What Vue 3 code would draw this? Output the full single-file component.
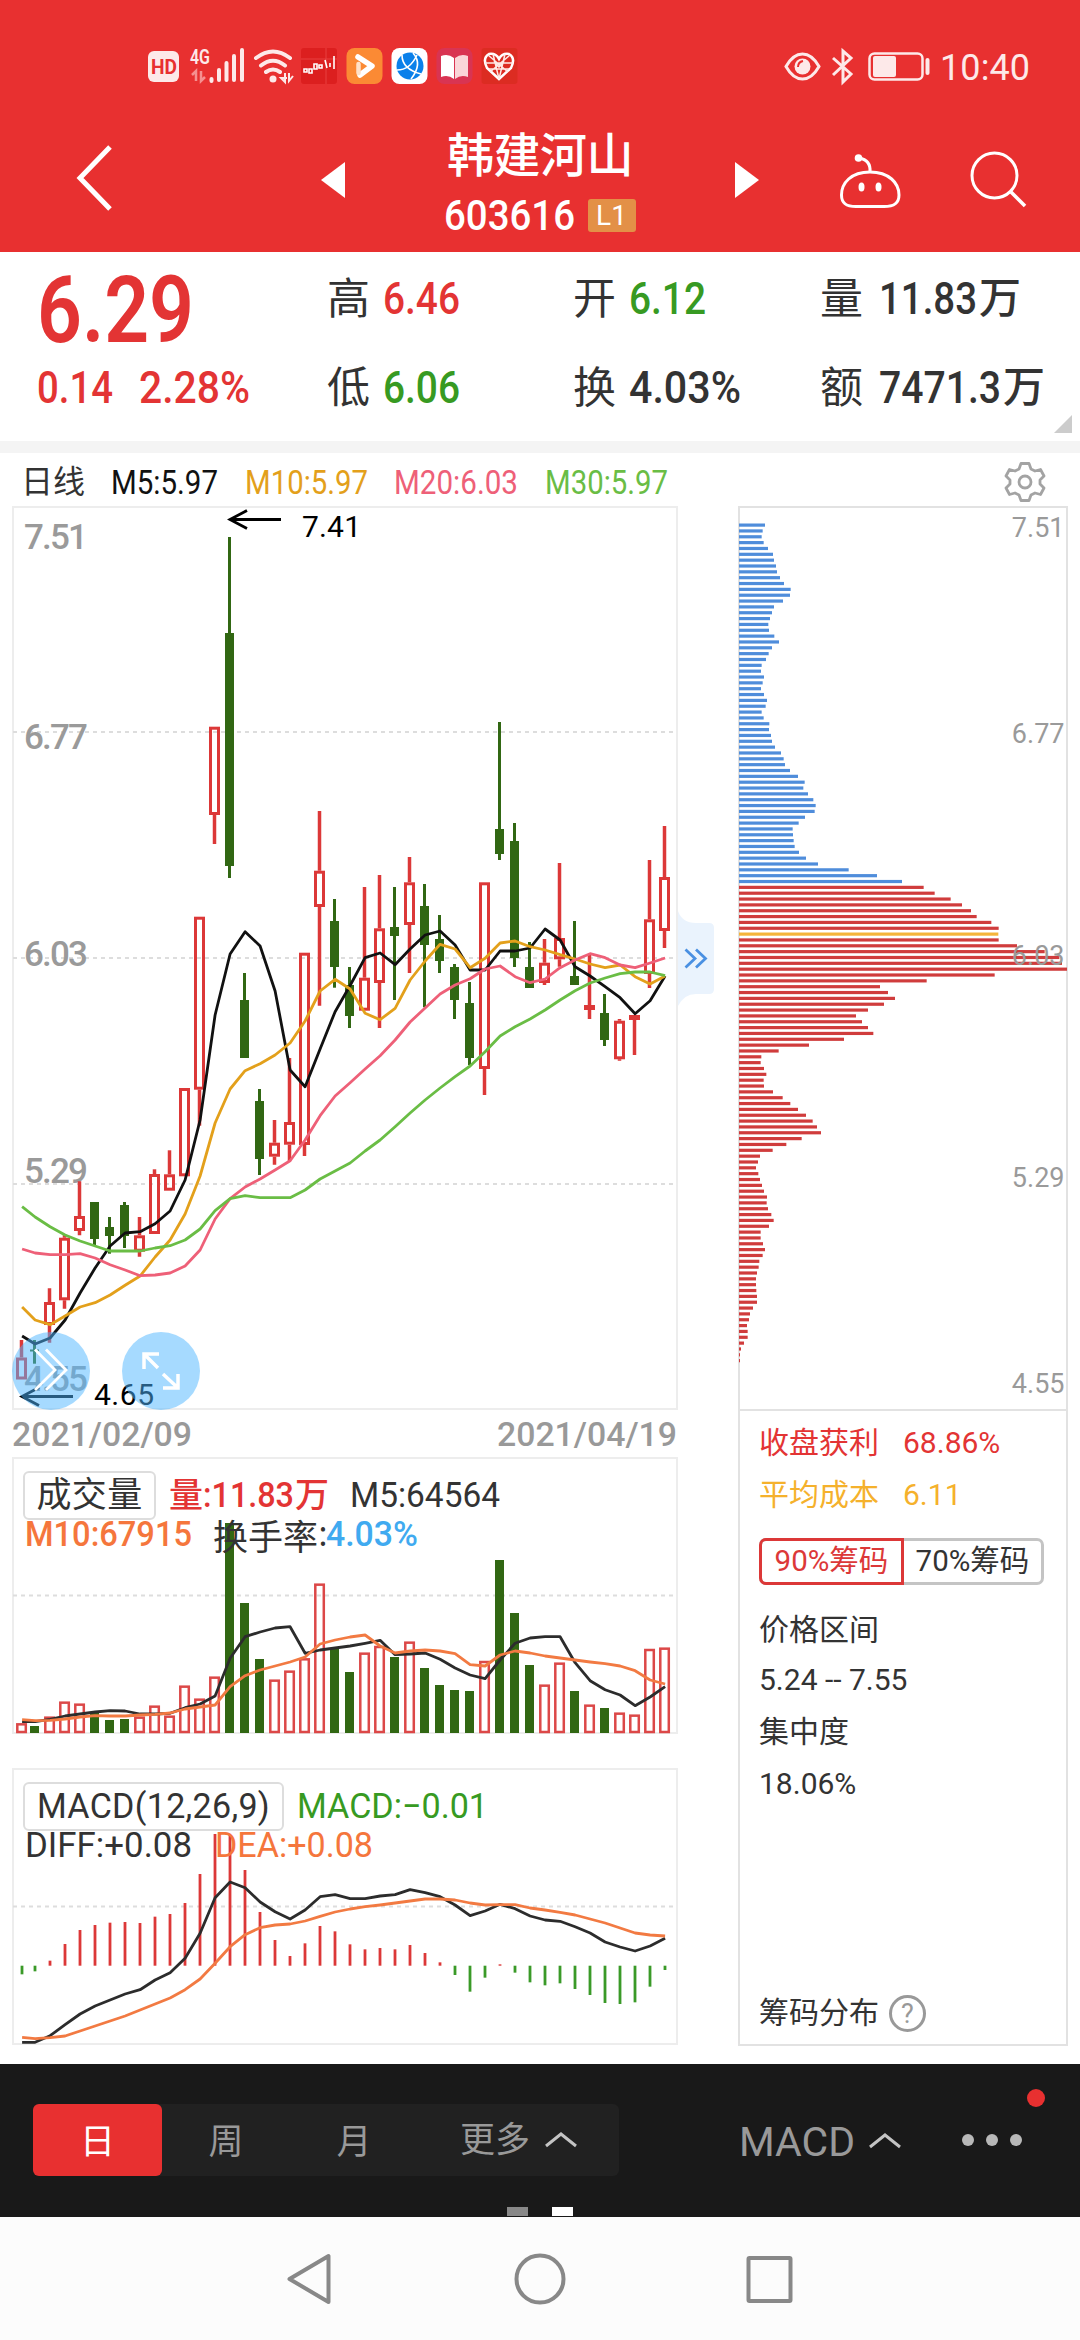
<script setup>
import { h } from 'vue'

// Text squeezed to a given width, as in a condensed numeral face.
const Fit = (p) =>
  h('svg', { class: 'fit', width: p.w, height: p.s * 0.72 }, [
    h('text', { x: -1, y: p.s * 0.715, 'font-size': p.s, textLength: +p.w + 1, lengthAdjust: 'spacingAndGlyphs', fill: 'currentColor' }, p.t),
  ])
Fit.props = ['t', 'w', 's']

const px = (i) => (i === 0 ? 21.5 : i === 1 ? 34.5 : 49.5 + 15 * (i - 2))
const line = (ys, base = 0, k = 1) => ys.map((y, i) => `${px(i) + 0.6},${(base + y / k).toFixed(1)}`).join(' ')

// colour, high, body top, body bottom, low
const candles = [
  ['r', 1340, 1357.5, 1379.5, 1379.5], ['g', 1340, 1349.5, 1351.5, 1363.7], ['r', 1288.3, 1302, 1325, 1342.7],
  ['r', 1234, 1237.7, 1300.3, 1308.7], ['r', 1181.3, 1216, 1231, 1235.3], ['g', 1202, 1202, 1239, 1245],
  ['g', 1217, 1227, 1236, 1253.7], ['g', 1202, 1205, 1236, 1248], ['r', 1217, 1235.3, 1251.7, 1256.7],
  ['r', 1169.3, 1174, 1234, 1234], ['r', 1150.3, 1174.3, 1190.7, 1190.7], ['r', 1088, 1088, 1176.3, 1176.3],
  ['r', 916.7, 916.7, 1089.7, 1125.7], ['r', 726.7, 726.7, 815, 844], ['g', 537, 633, 866, 878],
  ['g', 973, 1000, 1058, 1058], ['g', 1089, 1101, 1159, 1175], ['r', 1120, 1142.7, 1156.7, 1164.7],
  ['r', 1058, 1122, 1144.7, 1161.3], ['r', 952.7, 952.7, 1145, 1156], ['r', 811, 870.7, 907, 1005.7],
  ['g', 899, 921, 967, 987.7], ['g', 967, 985, 1016, 1028], ['r', 887, 977.7, 1010.7, 1010.7],
  ['r', 875, 928.3, 983, 1028], ['g', 887, 927, 936, 1000], ['r', 857, 882.3, 925, 973],
  ['g', 884, 906, 945, 1007.3], ['g', 915, 939, 961, 973], ['g', 964, 967, 1000, 1019],
  ['g', 982, 1003, 1058, 1065], ['r', 882.3, 882.3, 1069, 1095], ['g', 722, 829, 854, 860],
  ['g', 823, 841, 958, 967], ['g', 942, 967, 988, 988], ['r', 939, 962.7, 983, 985],
  ['r', 863, 938, 959.3, 966.7], ['g', 921, 976, 985, 985], ['r', 955, 1005, 1010, 1019],
  ['g', 994, 1013, 1040, 1046], ['r', 1019, 1020.7, 1059.3, 1060.7], ['r', 1015, 1015, 1020, 1055],
  ['r', 860, 919.3, 974, 988], ['r', 826, 877, 931, 948],
]
const ma5 = [1336, 1344, 1338, 1320, 1293, 1268, 1246, 1233, 1231.7, 1223.7, 1211, 1180, 1120, 1015, 954, 931.7, 946, 991, 1070, 1086.7, 1049, 1011.7, 985.5, 957.7, 953, 964.7, 949, 935, 931, 945, 970, 970, 951, 951, 948, 929, 940, 966.7, 976, 986.7, 997.7, 1013.7, 1000.7, 976]
const ma10 = [1307, 1320, 1324.7, 1316, 1307, 1302.7, 1295, 1285.3, 1276, 1257, 1240, 1214, 1176, 1123, 1089, 1070.7, 1063.7, 1055, 1043, 1021, 991, 979.3, 989, 1013.3, 1019.7, 1008.3, 980, 961, 944.3, 949, 967.7, 958.3, 943, 941, 946.7, 950, 954.7, 959, 964, 967.7, 965, 976.7, 984, 976]
const ma20 = [1249, 1253, 1254.7, 1254.7, 1253.7, 1258, 1264.7, 1270, 1275.7, 1275, 1273, 1266, 1250, 1219, 1198.7, 1187, 1179, 1170, 1160.7, 1140, 1115.7, 1096, 1082.7, 1069, 1055.7, 1040, 1022, 1008, 994, 985, 978.7, 969, 966, 976.7, 982.7, 979, 967.7, 960, 953.7, 957.7, 965, 967.7, 963, 958]
const ma30 = [1206.7, 1217, 1226.7, 1235, 1241, 1246, 1251, 1251, 1251, 1248, 1245.7, 1240, 1229, 1210.7, 1198.7, 1195.7, 1197.7, 1197.7, 1197.7, 1190, 1179, 1171, 1163, 1151, 1140, 1126.7, 1113, 1100, 1088, 1076.7, 1066, 1051.7, 1036, 1026.7, 1019, 1010, 1000, 990.7, 983, 978, 973.7, 972, 972, 975.7]
const priceLabels = [['7.51', 549], ['6.77', 749], ['6.03', 966], ['5.29', 1183], ['4.55', 1391]]

const vol = [820, 828, 800, 755, 761, 788, 810, 807, 800, 767, 797, 707, 746, 680, 219, 459, 627, 689, 662, 625, 401, 597, 666, 608, 588, 621, 575, 654, 705, 720, 723, 633, 330, 489, 645, 704, 638, 723, 764, 774, 788, 794, 597, 593]
const vol5 = [815, 815, 808, 798, 792, 786, 782, 783, 792, 792, 790, 773, 762, 738, 625, 560, 546, 534, 530, 610, 600, 594, 588, 580, 571, 614, 612, 609, 628, 654, 675, 686, 630, 580, 564, 560, 560, 638, 692, 719, 735, 767, 741, 710]
const vol10 = [809, 812, 811, 807, 801, 797, 798, 798, 795, 793, 789, 777, 771, 765, 710, 677, 660, 648, 636, 621, 582, 570, 561, 555, 588, 609, 603, 600, 603, 611, 644, 648, 615, 603, 609, 618, 624, 630, 636, 641, 648, 662, 690, 702]

const hist = [673, 664, 632, 582, 540, 525, 518, 516, 519, 500, 492, 459, 372, 252, 255, 360, 486, 570, 618, 580, 528, 544, 583, 598, 594, 598, 585, 609, 637, 675, 725, 683, 643, 668, 697, 706, 700, 717, 735, 759, 762, 757, 710, 660]
const diff = [877, 877, 857, 824, 792, 768, 750, 732, 719, 690, 668, 625, 550, 443, 396, 413, 456, 485, 507, 480, 440, 434, 446, 446, 438, 434, 419, 428, 440, 465, 497, 483, 463, 476, 498, 510, 514, 530, 549, 576, 591, 603, 588, 565]
const dea = [862, 866, 863, 858, 843, 828, 813, 798, 780, 762, 744, 719, 687, 640, 590, 554, 533, 525, 522, 513, 499, 486, 477, 470, 465, 459, 453, 447, 447, 450, 459, 465, 464, 464, 474, 480, 487, 495, 507, 519, 534, 549, 555, 558]

const chips = [165, 158, 155, 161, 174, 189, 192, 198, 201, 210, 222, 242, 240, 219, 192, 186, 180, 175, 177, 193, 207, 186, 176, 168, 155, 153, 162, 158, 153, 162, 171, 167, 155, 161, 178, 177, 183, 186, 195, 213, 221, 225, 240, 264, 284, 280, 294, 310, 317, 314, 285, 266, 248, 249, 251, 254, 267, 288, 324, 416, 501, 576,
  641, 674, 722, 756, 783, 800, 844, 866, 865, 866, 921, 1004, 1048, 1056, 1071, 854, 650, 510, 534, 555, 522, 474, 438, 456, 474, 490, 402, 297, 206, 154, 152, 162, 169, 161, 162, 189, 218, 241, 264, 288, 308, 321, 333, 275, 229, 188, 150, 144, 138, 145, 150, 156, 162, 171, 170, 174, 184, 191, 177, 152, 152, 159, 165, 158, 148, 146, 141, 138, 138, 139, 141, 141, 129, 120, 117, 111, 113, 113, 102, 93, 90, 90]
const chipColor = (i) => (i < 62 ? '#4f8ddb' : i === 70 ? '#f5b43a' : '#d03c3c')
const chipLabels = [['7.51', 537], ['6.77', 743], ['6.03', 965], ['5.29', 1187], ['4.55', 1393]]
</script>

<template>
  <div class="app">
    <header class="top">
      <svg class="status" width="1080" height="100" viewBox="0 0 1080 100">
        <rect x="148" y="51" width="31" height="31" rx="6" fill="#fde9e9" />
        <text x="151" y="74" font-size="21" font-weight="700" fill="#e83030" textLength="26" lengthAdjust="spacingAndGlyphs">HD</text>
        <text x="190" y="64" font-size="21" font-weight="600" fill="#fde9e9" textLength="20" lengthAdjust="spacingAndGlyphs">4G</text>
        <path d="M196 81V71L192 75M201 71V81L205 77" stroke="#f59090" stroke-width="2.5" fill="none" />
        <path d="M211.500 79V81M219 70V80M226.500 63V80M234 56V80M242 50V80" stroke="#fde9e9" stroke-width="4" stroke-linecap="round" />
        <g fill="none" stroke="#fde9e9" stroke-width="4" stroke-linecap="round">
          <path d="M256 58Q273 45 290 58M261 65.500Q273 56 285 65.500M266 72Q273 67 280 72" />
        </g>
        <circle cx="273" cy="79" r="3.500" fill="#fde9e9" />
        <path d="M285 73V82L281 78H287M289 73V81L293 76" stroke="#fde9e9" stroke-width="2" fill="none" />
        <rect x="301" y="48" width="36" height="36" rx="3" fill="#dc1f1f" />
        <path d="M301 59H337M326 48V84" stroke="#e84040" stroke-width="1" />
        <path d="M304 69H307V72H304ZM309 69H312V73H309ZM314 64H317V69H314ZM319 65H322V68H319ZM325 60L327 68M330 63V67M334 56V69" stroke="#fff" stroke-width="1.600" fill="none" />
        <rect x="346.500" y="48" width="36" height="36" rx="8" fill="#fb8a34" />
        <path d="M358 57L372 66L360 75" fill="none" stroke="#fff" stroke-width="5.500" stroke-linejoin="round" stroke-linecap="round" />
        <path d="M358.500 64V73" stroke="#ffe1c8" stroke-width="4.500" stroke-linecap="round" />
        <rect x="391.500" y="48" width="36" height="36" rx="8" fill="#fff" />
        <circle cx="410" cy="66" r="13.500" fill="#0a80ea" />
        <path d="M402 55Q402 69 421 74M397 70Q410 70 417 55M413 53Q423 64 411 79" stroke="#fff" stroke-width="1.600" fill="none" />
        <rect x="436.500" y="48" width="36" height="36" rx="8" fill="#d93452" />
        <path d="M441 56Q448 53 454 58V79Q448 74 441 77Z" fill="#fff" />
        <path d="M468 56Q461 53 455 58V79Q461 74 468 77Z" fill="#fad5d8" />
        <rect x="481.500" y="48" width="36" height="36" rx="3" fill="#dc2c22" />
        <path d="M499 79L487 68Q482 58 489 54Q496 53 499 59Q502 53 509 54Q516 58 511 68Z" fill="none" stroke="#fff" stroke-width="2.500" />
        <path d="M488 55L508 72M510 55L490 72M485 63H513M493 54L499 79L505 54M489 69H509M494 61L499 67L504 61" stroke="#ffe9e6" stroke-width="1.500" fill="none" />
        <g fill="none" stroke="#fde9e9" stroke-width="3">
          <path d="M786 66.500Q793 54 802.500 54Q812 54 819 66.500Q812 79 802.500 79Q793 79 786 66.500Z" />
          <path d="M833 58L851 74L843 82V51L851 58L833 75" />
          <rect x="869.500" y="53.500" width="53" height="26" rx="5" stroke-width="2.500" />
        </g>
        <circle cx="802.500" cy="66.500" r="8" fill="#fde9e9" />
        <path d="M798 67Q798 62 803 61" stroke="#e83030" stroke-width="2" fill="none" />
        <rect x="873" y="56" width="23" height="21" rx="2" fill="#fde9e9" />
        <rect x="925.500" y="58" width="4" height="17" rx="2" fill="#fde9e9" />
        <text x="940" y="80" font-size="36" fill="#fde9e9" textLength="90">10:40</text>
      </svg>
      <div class="titlebar">
        <svg class="back" width="40" height="70" viewBox="0 0 40 70"><path d="M35 4L5 35L35 66" fill="none" stroke="#fff" stroke-width="5" /></svg>
        <svg class="prev" width="24" height="36" viewBox="0 0 24 36"><path d="M24 0V36L0 18Z" fill="#fff" /></svg>
        <div class="title">
          <div class="name">韩建河山</div>
          <div class="code"><Fit t="603616" w="130" s="42" /><span class="badge">L1</span></div>
        </div>
        <svg class="next" width="24" height="36" viewBox="0 0 24 36"><path d="M0 0V36L24 18Z" fill="#fff" /></svg>
        <svg class="robot" width="62" height="58" viewBox="839 152 62 58">
          <path d="M870 172C889 172 899 183 899 195C899 204 893 206.500 884 206.500H856C847 206.500 841.500 204 841.500 195C841.500 183 851 172 870 172Z" fill="none" stroke="#fff" stroke-width="3" />
          <path d="M870 172Q871 160 859 158" fill="none" stroke="#fff" stroke-width="3" />
          <circle cx="858.500" cy="158" r="3.800" fill="#fff" /><ellipse cx="861.500" cy="187" rx="3" ry="4.500" fill="#fff" /><ellipse cx="878.500" cy="187" rx="3" ry="4.500" fill="#fff" />
        </svg>
        <svg class="search" width="60" height="60" viewBox="969 150 60 60"><circle cx="994.500" cy="175.500" r="22.500" fill="none" stroke="#fff" stroke-width="3" /><path d="M1010 191L1025 206" stroke="#fff" stroke-width="3.500" /></svg>
      </div>
    </header>

    <section class="quote">
      <div class="last red">
        <Fit class="big" t="6.29" w="156" s="92" />
        <div class="chg"><Fit t="0.14" w="75" s="45" /><Fit t="2.28%" w="110" s="45" /></div>
      </div>
      <div class="cells">
        <div class="cell"><span>高</span><Fit class="red" t="6.46" w="76" s="45" /></div>
        <div class="cell"><span>开</span><Fit class="green" t="6.12" w="76" s="45" /></div>
        <div class="cell"><span>量</span><Fit t="11.83" w="97" s="45" /><b>万</b></div>
        <div class="cell"><span>低</span><Fit class="green" t="6.06" w="76" s="45" /></div>
        <div class="cell"><span>换</span><Fit t="4.03%" w="111" s="45" /></div>
        <div class="cell"><span>额</span><Fit t="7471.3" w="121" s="45" /><b>万</b></div>
      </div>
      <svg class="corner" width="18" height="18" viewBox="0 0 18 18"><path d="M18 0V18H0Z" fill="#ccc" /></svg>
    </section>

    <div class="legend">
      <span class="period">日线</span>
      <Fit class="m5" t="M5:5.97" w="106" s="33" />
      <Fit class="m10" t="M10:5.97" w="122" s="33" />
      <Fit class="m20" t="M20:6.03" w="123" s="33" />
      <Fit class="m30" t="M30:5.97" w="122" s="33" />
      <svg class="gear" width="42" height="42" viewBox="-21 -21 42 42" fill="none" stroke="#a3a3a3" stroke-width="2.800" stroke-linejoin="round">
        <path d="M-4 -18.500H4L6 -13L10 -11L15.500 -12.500L19 -6L15 -2V2L19 6L15.500 12.500L10 11L6 13L4 18.500H-4L-6 13L-10 11L-15.500 12.500L-19 6L-15 2V-2L-19 -6L-15.500 -12.500L-10 -11L-6 -13Z" />
        <circle r="6" />
      </svg>
    </div>

    <main class="charts">
      <div class="left">
        <svg class="kline" width="704" height="904" viewBox="12 506 704 904">
          <rect x="13" y="507" width="664" height="902" fill="none" stroke="#ededed" stroke-width="2" />
          <path d="M13 732H677M13 958H677M13 1184H677" stroke="#ddd" stroke-width="2" stroke-dasharray="4 4" />
          <g font-size="35" font-weight="500" fill="#9a9a9a">
            <text v-for="l in priceLabels" :key="l[0]" x="24" :y="l[1]" textLength="64">{{ l[0] }}</text>
          </g>
          <g v-for="(c, i) in candles" :key="i">
            <template v-if="c[0] === 'g'">
              <path :d="`M${px(i)} ${c[1]}V${c[4]}`" stroke="#316713" stroke-width="3" />
              <rect :x="px(i) - 4.5" :y="c[2]" width="9" :height="c[3] - c[2]" fill="#316713" />
            </template>
            <template v-else>
              <path :d="`M${px(i)} ${c[1]}V${c[2]}M${px(i)} ${c[3]}V${c[4]}`" stroke="#dc3838" stroke-width="3.5" />
              <rect :x="px(i) - 4" :y="c[2] + 1.5" width="8" :height="c[3] - c[2] - 3" fill="none" stroke="#dc3838" stroke-width="3" />
            </template>
          </g>
          <g fill="none" stroke-width="2.8" stroke-linejoin="round">
            <polyline :points="line(ma5)" stroke="#111" />
            <polyline :points="line(ma10)" stroke="#e3a01b" />
            <polyline :points="line(ma20)" stroke="#ee6078" />
            <polyline :points="line(ma30)" stroke="#6abd45" />
          </g>
          <g fill="none" stroke="#000" stroke-width="2.8">
            <path d="M281 519.500H230M247 510.500L230 519.500L247 528.500" />
            <path d="M73 1396.500H22M39 1387.500L22 1396.500L39 1405.500" />
          </g>
          <text x="302" y="537" font-size="30" textLength="59" fill="#000">7.41</text>
          <text x="94" y="1405" font-size="30" textLength="60" fill="#000">4.65</text>
          <path d="M678 911Q682 923 696 923H709Q714 923 714 928V989Q714 994 709 994H696Q684 994 678 1006Z" fill="#eaf3fd" />
          <path d="M685.500 949.500L695 958.500L685.500 967.500M696 949.500L705.500 958.500L696 967.500" fill="none" stroke="#4a90e2" stroke-width="2.800" />
          <circle cx="51" cy="1371" r="39" fill="#4db5ff" fill-opacity=".5" />
          <circle cx="161" cy="1371" r="39" fill="#4db5ff" fill-opacity=".5" />
          <path d="M35 1349.500L55 1370L35 1390M46 1349.500L66 1370L46 1390" fill="none" stroke="#fff" stroke-width="2.800" />
          <path d="M158 1368L144 1354M144 1369V1354H159M163 1374L178 1388M178 1374V1388H163" fill="none" stroke="#fff" stroke-width="3.500" />
        </svg>
        <div class="dates"><Fit t="2021/02/09" w="179" s="34" /><Fit t="2021/04/19" w="179" s="34" /></div>
        <div class="sub vol">
          <svg width="666" height="278" viewBox="12 1457 666 278">
            <rect x="13" y="1458" width="664" height="275" fill="none" stroke="#ededed" stroke-width="2" />
            <path d="M13 1595.500H677" stroke="#ddd" stroke-width="2" stroke-dasharray="4 4" />
            <template v-for="(v, i) in vol" :key="i">
              <rect v-if="candles[i][0] === 'g'" :x="px(i) - 4.5" :y="1450 + v / 3" width="9" :height="283 - v / 3" fill="#316713" />
              <rect v-else :x="px(i) - 4.2" :y="1451 + v / 3" width="8.5" :height="281 - v / 3" fill="none" stroke="#dc4848" stroke-width="2.5" />
            </template>
            <g fill="none" stroke-width="2.8" stroke-linejoin="round">
              <polyline :points="line(vol5, 1450, 3)" stroke="#2c2c2c" />
              <polyline :points="line(vol10, 1450, 3)" stroke="#f27a42" />
            </g>
          </svg>
          <div class="info">
            <div class="row">
              <span class="btn">成交量</span>
              <span class="grp red">量<Fit t=":11.83" w="90" s="35" />万</span>
              <Fit t="M5:64564" w="149" s="35" class="gap" />
            </div>
            <div class="row two"><Fit class="orange" t="M10:67915" w="166" s="35" /><span class="turn">换手率</span><Fit t=":" w="7" s="35" /><Fit class="sky" t="4.03%" w="91" s="35" /></div>
          </div>
        </div>
        <div class="sub macd">
          <svg width="666" height="278" viewBox="12 1768 666 278">
            <rect x="13" y="1769" width="664" height="275" fill="none" stroke="#ededed" stroke-width="2" />
            <path d="M13 1906.500H677" stroke="#ddd" stroke-width="2" stroke-dasharray="4 4" />
            <path v-for="(v, i) in hist" :key="i" :d="`M${px(i) + 0.5} 1965.7V${1750 + v / 3}`" :stroke="v < 647 ? '#dc3838' : '#3a9a28'" stroke-width="2.8" />
            <g fill="none" stroke-width="2.8" stroke-linejoin="round">
              <polyline :points="line(diff, 1750, 3)" stroke="#2c2c2c" />
              <polyline :points="line(dea, 1750, 3)" stroke="#f27a42" />
            </g>
          </svg>
          <div class="info">
            <div class="row"><span class="btn wide"><Fit t="MACD(12,26,9)" w="232" s="35" /></span><Fit class="green m" t="MACD:−0.01" w="190" s="35" /></div>
            <div class="row two"><Fit t="DIFF:+0.08" w="166" s="35" /><Fit class="orange d" t="DEA:+0.08" w="157" s="35" /></div>
          </div>
        </div>
      </div>

      <aside class="panel">
        <svg width="330" height="903" viewBox="738 506 330 903">
          <rect v-for="(v, i) in chips" :key="i" x="739" :y="523.5 + i * 5.843" :width="(v - 87) / 3" height="3.2" :fill="chipColor(i)" />
          <g font-size="27" fill="#9a9a9a" text-anchor="end">
            <text v-for="l in chipLabels" :key="l[0]" x="1064.5" :y="l[1]">{{ l[0] }}</text>
          </g>
        </svg>
        <div class="stats">
          <p class="red"><span>收盘获利</span>68.86%</p>
          <p class="amber"><span>平均成本</span>6.11</p>
          <div class="switch"><span class="on">90%筹码</span><span>70%筹码</span></div>
          <p class="r1">价格区间</p>
          <p class="r2">5.24 -- 7.55</p>
          <p class="r3">集中度</p>
          <p class="r4">18.06%</p>
          <p class="foot">筹码分布<span class="q">?</span></p>
        </div>
      </aside>
    </main>

    <footer class="bar">
      <div class="tabs">
        <span class="tab on">日</span><span class="tab">周</span><span class="tab">月</span>
        <span class="tab more">更多<svg width="34" height="18" viewBox="0 0 34 18"><path d="M2 15L17 3L32 15" fill="none" stroke="#c4c4c4" stroke-width="3" /></svg></span>
      </div>
      <span class="ind"><Fit t="MACD" w="115" s="40" /><svg width="34" height="18" viewBox="0 0 34 18"><path d="M2 15L17 3L32 15" fill="none" stroke="#c4c4c4" stroke-width="3" /></svg></span>
      <span class="dots"><i /><i /><i /></span>
      <i class="reddot" />
      <div class="pages"><i /><i /></div>
    </footer>
    <nav class="nav">
      <svg width="1080" height="123" viewBox="0 2217 1080 123" fill="none" stroke="#888" stroke-width="4" stroke-linejoin="round">
        <path d="M328.500 2256V2302L289.500 2279Z" /><circle cx="540" cy="2279" r="23.500" /><rect x="748.500" y="2258" width="42" height="43" rx="1" />
      </svg>
    </nav>
  </div>
</template>

<style>
body { margin: 0; background: #fff; }
</style>

<style scoped>
.app { width: 1080px; height: 2340px; overflow: hidden; display: flex; flex-direction: column; font-family: Roboto, "Noto Sans CJK SC", sans-serif; color: #333; background: #fff; }
svg { display: block; flex: none; }
.fit { overflow: visible; font-weight: 500; }
.red { color: #e33434; }
.green { color: #379a22; }
.orange { color: #f5763c; }
.sky { color: #40aaf0; }
.top { height: 252px; background: #e83030; color: #fff; }
.titlebar { height: 152px; display: flex; align-items: flex-start; }
.back { margin: 43px 0 0 75px; }
.prev { margin: 62px 0 0 206px; }
.title { width: 192px; margin-left: 99px; display: flex; flex-direction: column; align-items: center; }
.name { font-size: 47px; line-height: 60px; margin-top: 26px; font-weight: 500; white-space: nowrap; letter-spacing: -.5px; }
.code { display: flex; align-items: center; gap: 13px; margin-top: 13px; }
.badge { width: 48px; height: 33px; line-height: 34px; text-align: center; font-size: 28px; background: #e39047; border-radius: 3px; }
.next { margin: 62px 0 0 99px; }
.robot { margin: 52px 0 0 80px; }
.search { margin: 50px 0 0 68px; }
.quote { position: relative; box-sizing: border-box; height: 201px; border-bottom: 12px solid #f4f4f4; display: flex; }
.last { width: 289px; padding-left: 38px; }
.big { margin-top: 24px; font-weight: 600; }
.chg { display: flex; gap: 27px; margin-top: 29px; }
.cells { display: grid; grid-template-columns: 246px 247px 252px; grid-template-rows: 89px 89px; padding-top: 2px; }
.cell { display: flex; align-items: center; font-size: 43px; line-height: 60px; white-space: nowrap; }
.cell span { width: 57px; flex: none; }
.cell:nth-child(3n) span { width: 60px; }
.cell b { font-weight: 500; font-size: 42px; margin-left: 2px; }
.corner { position: absolute; right: 8px; bottom: 8px; }
.legend { height: 53px; display: flex; align-items: center; padding: 4px 0 0 21px; box-sizing: border-box; }
.period { font-size: 32px; line-height: 40px; width: 91px; }
.legend .fit { font-weight: 400; }
.m5 { color: #111; }
.m10 { color: #e3a01b; margin-left: 28px; }
.m20 { color: #ee6078; margin-left: 27px; }
.m30 { color: #6abd45; margin-left: 28px; }
.gear { margin-left: 336px; }
.charts { display: flex; height: 1558px; }
.left { width: 704px; margin-left: 12px; }
.kline { overflow: visible; }
.dates { width: 666px; height: 47px; display: flex; justify-content: space-between; align-items: center; color: #999; padding: 0 1px; box-sizing: border-box; }
.dates .fit { margin-top: 2px; }
.sub { position: relative; height: 311px; }
.info { position: absolute; left: 11px; top: 13px; }
.row { display: flex; align-items: center; height: 50px; font-size: 35px; font-weight: 500; white-space: nowrap; }
.two { height: 28px; margin-left: 3px; }
.btn { box-sizing: border-box; width: 133px; height: 49px; border: 2px solid #ddd; border-radius: 6px; line-height: 46px; text-align: center; font-weight: 400; letter-spacing: .3px; }
.grp { display: flex; align-items: center; width: 160px; margin-left: 13px; font-size: 34px; line-height: 50px; }
.grp .fit { margin: 0 1px; }
.gap { margin-left: 22px; font-weight: 400; }
.turn { margin: 0 2px 0 21px; font-weight: 400; }
.wide { width: 261px; display: flex; align-items: center; justify-content: center; }
.m { margin-left: 14px; }
.d { margin-left: 24px; }
.sub.macd .fit { font-weight: 400; }
.panel { box-sizing: border-box; width: 330px; height: 1540px; border: 2px solid #e2e2e2; margin-left: 22px; }
.panel > svg { margin: -2px 0 0 -2px; }
.stats { position: relative; border-top: 2px solid #e2e2e2; padding: 10px 0 0 19px; font-size: 30px; }
.stats p { margin: 0; height: 44px; line-height: 44px; margin-bottom: 8px; white-space: nowrap; }
.stats p span:not(.q) { margin-right: 24px; }
.amber { color: #f5b12c; }
.switch { display: flex; margin: 21px 0 23px; width: 285px; height: 47px; box-sizing: border-box; border: 3px solid #c4c4c4; border-radius: 7px; line-height: 40px; }
.switch span { flex: 1; text-align: center; font-size: 29.500px; }
.switch .on { flex: none; width: 139px; margin: -3px 0 -3px -3px; border: 3px solid #dc3838; color: #dc3838; border-radius: 7px 0 0 7px; }
.stats .r1 { margin-bottom: 6px; }
.foot { display: flex; align-items: center; padding-top: 177px; }
.q { width: 31px; height: 31px; border: 3px solid #999; border-radius: 50%; margin-left: 10px; color: #999; text-align: center; line-height: 32px; font-size: 27px; }
.bar { position: relative; height: 153px; background: #191919; display: flex; align-items: flex-start; color: #999; }
.tabs { margin: 40px 0 0 33px; width: 586px; height: 72px; background: #212121; border-radius: 6px; display: flex; font-size: 35px; line-height: 77px; }
.tab { width: 128px; height: 72px; text-align: center; }
.tab.on { width: 129px; background: #e83030; color: #fff; border-radius: 6px; }
.more { width: auto; margin-left: 42px; display: flex; align-items: center; gap: 14px; }
.ind { display: flex; align-items: center; gap: 13px; height: 72px; margin: 41px 0 0 121px; }
.ind .fit { font-weight: 400; }
.dots { display: flex; gap: 12px; margin: 70px 0 0 60px; }
.dots i { width: 12px; height: 12px; border-radius: 50%; background: #b8b8b8; }
.reddot { position: absolute; left: 1027px; top: 25px; width: 18px; height: 18px; border-radius: 50%; background: #e83030; }
.pages { position: absolute; left: 507px; bottom: 1px; display: flex; gap: 24px; }
.pages i { width: 21px; height: 9px; background: #888; }
.pages i + i { background: #fff; }
.nav { height: 123px; background: #fcfcfc; }
</style>
